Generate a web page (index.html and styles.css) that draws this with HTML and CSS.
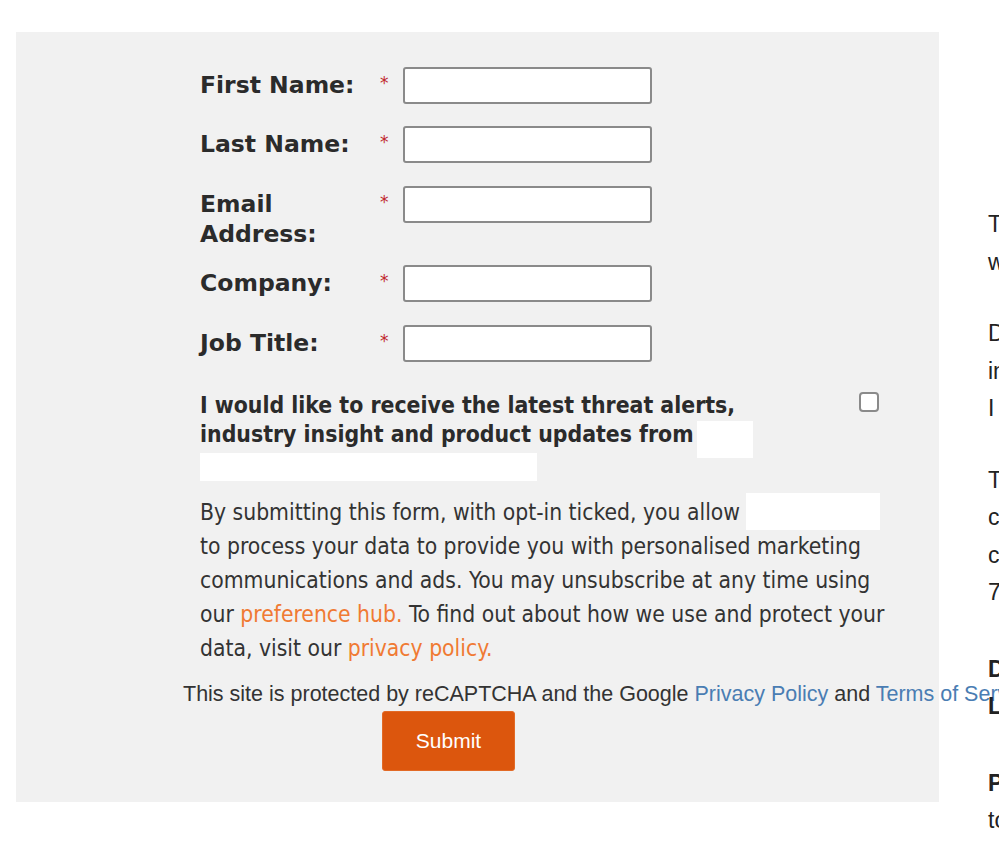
FILE: index.html
```html
<!DOCTYPE html>
<html lang="en">
<head>
    <meta charset="UTF-8">
    <meta name="viewport" content="width=device-width, initial-scale=1.0">
    <title>Register</title>
    <link rel="stylesheet" href="styles.css">
</head>
<body>
    <div class="page">
        <div class="form-panel">
            <form class="form">
                <!-- Required fields -->
                <div class="row">
                    <label class="label" for="firstName">First Name:</label>
                    <span class="req">*</span>
                    <input class="field" type="text" id="firstName">
                </div>
                <div class="row">
                    <label class="label" for="lastName">Last Name:</label>
                    <span class="req">*</span>
                    <input class="field" type="text" id="lastName">
                </div>
                <div class="row">
                    <label class="label" for="email">Email Address:</label>
                    <span class="req">*</span>
                    <input class="field" type="email" id="email">
                </div>
                <div class="row">
                    <label class="label" for="company">Company:</label>
                    <span class="req">*</span>
                    <input class="field" type="text" id="company">
                </div>
                <div class="row">
                    <label class="label" for="jobTitle">Job Title:</label>
                    <span class="req">*</span>
                    <input class="field" type="text" id="jobTitle">
                </div>

                <!-- Opt-in -->
                <div class="optin">
                    <label class="optin-text" for="optin">I would like to receive the latest threat alerts, industry insight and product updates from<span class="hide hide-a"></span><br><span class="hide hide-b"></span></label>
                    <input class="check" type="checkbox" id="optin">
                </div>

                <p class="legal">By submitting this form, with opt-in ticked, you allow <span class="hide hide-c"></span><br>to process your data to provide you with personalised marketing communications and ads. You may unsubscribe at any time using our <a href="#">preference hub.</a> To find out about how we use and protect your data, visit our <a href="#">privacy policy.</a></p>

                <div class="captcha">This site is protected by reCAPTCHA and the Google <a href="#">Privacy Policy</a> and <a href="#">Terms of Service</a> apply.</div>

                <button class="submit" type="button">Submit</button>
            </form>
        </div>

        <div class="side">
            <p>The webinar will be presented live<br>with a Q&amp;A session at the end.</p>
            <p>During this session our analysts<br>introduce the latest findings from<br>I hope you can join us there.</p>
            <p>The recording will be sent to all<br>contacts after the event, so you<br>can catch up if you miss it.<br>7 days of access is included.</p>
            <p class="info"><b>Date: Thursday</b><br><b>Location: Online</b></p>
            <p class="info"><b>Presenters:</b><br>to be announced</p>
        </div>
    </div>
</body>
</html>
```

FILE: styles.css
```css
/* General reset */
body {
    margin: 0;
    padding: 0;
    background-color: white;
    overflow: hidden;
}

.page {
    display: flex;
    align-items: flex-start;
    padding: 32px 0 0 16px;
    width: 1500px;
}

/* Grey form box */
.form-panel {
    background-color: #f1f1f1;
    width: 923px;
    flex-shrink: 0;
    padding: 35px 0 31px 184px;
    box-sizing: border-box;
    height: 770px;
}

.form {
    width: 700px;
}

/* Field rows */
.row {
    display: flex;
    align-items: flex-start;
    min-height: 44px;
    padding-bottom: 16px;
}

.row:first-child {
    min-height: 43px;
}

.label {
    width: 178px;
    padding-top: 3px;
    font-family: "DejaVu Sans", Verdana, sans-serif;
    font-weight: bold;
    font-size: 23.5px;
    line-height: 30px;
    color: #2b2b2b;
}

.req {
    width: 25px;
    color: #c0282d;
    font-family: "DejaVu Sans", sans-serif;
    font-size: 17px;
    line-height: 22px;
    padding-top: 5px;
    padding-left: 2px;
    box-sizing: border-box;
}

.field {
    width: 249px;
    height: 37px;
    box-sizing: border-box;
    margin: 0;
    border: 2px solid #8a8a8a;
    border-radius: 3px;
    background-color: white;
}

/* Opt-in block */
.optin {
    display: flex;
    align-items: flex-start;
    margin-top: 6px;
}

.optin-text {
    width: 560px;
    font-family: "DejaVu Sans Condensed", "DejaVu Sans", sans-serif;
    font-weight: bold;
    font-size: 22.8px;
    line-height: 29px;
    color: #2b2b2b;
}

.check {
    width: 20px;
    height: 20px;
    margin: 1px 0 0 99px;
    appearance: none;
    border: 2px solid #8a8a8a;
    border-radius: 4px;
    background-color: white;
}

/* White blocks over the company name */
.hide {
    display: inline-block;
    background-color: white;
    vertical-align: top;
}

.hide-a {
    width: 56px;
    height: 37px;
    margin: 1px 0 -9px 3px;
}

.hide-b {
    width: 337px;
    height: 28px;
    margin-top: 4px;
    margin-bottom: -3px;
}

.hide-c {
    width: 134px;
    height: 37px;
    margin-top: -2px;
    margin-bottom: -1px;
}

.legal {
    margin: 17px 0 0 0;
    width: 700px;
    font-family: "DejaVu Sans Condensed", "DejaVu Sans", sans-serif;
    font-size: 22.7px;
    line-height: 34px;
    color: #333;
}

.legal a {
    color: #f07a33;
    text-decoration: none;
}

.captcha {
    margin: 16px 0 0 -17px;
    white-space: nowrap;
    font-family: "Liberation Sans", Arial, sans-serif;
    font-size: 21.5px;
    line-height: 26px;
    color: #333;
}

.captcha a {
    color: #4a7db3;
    text-decoration: none;
}

/* Submit button */
.submit {
    display: block;
    margin: 4px 0 0 182px;
    width: 133px;
    height: 60px;
    background-color: #dc560d;
    border: 1px solid #e26a26;
    border-radius: 3px;
    color: white;
    font-family: "Liberation Sans", Arial, sans-serif;
    font-size: 21px;
    cursor: pointer;
}

/* Right hand text column */
.side {
    margin: 0 0 0 49px;
    padding-top: 174px;
    width: 420px;
    flex-shrink: 0;
    font-family: "Liberation Sans", Arial, sans-serif;
    font-size: 23px;
    line-height: 37.5px;
    color: #222;
    white-space: nowrap;
}

.side p {
    margin: 0 0 34px 0;
}

.side .info {
    margin-top: 39px;
}
```
